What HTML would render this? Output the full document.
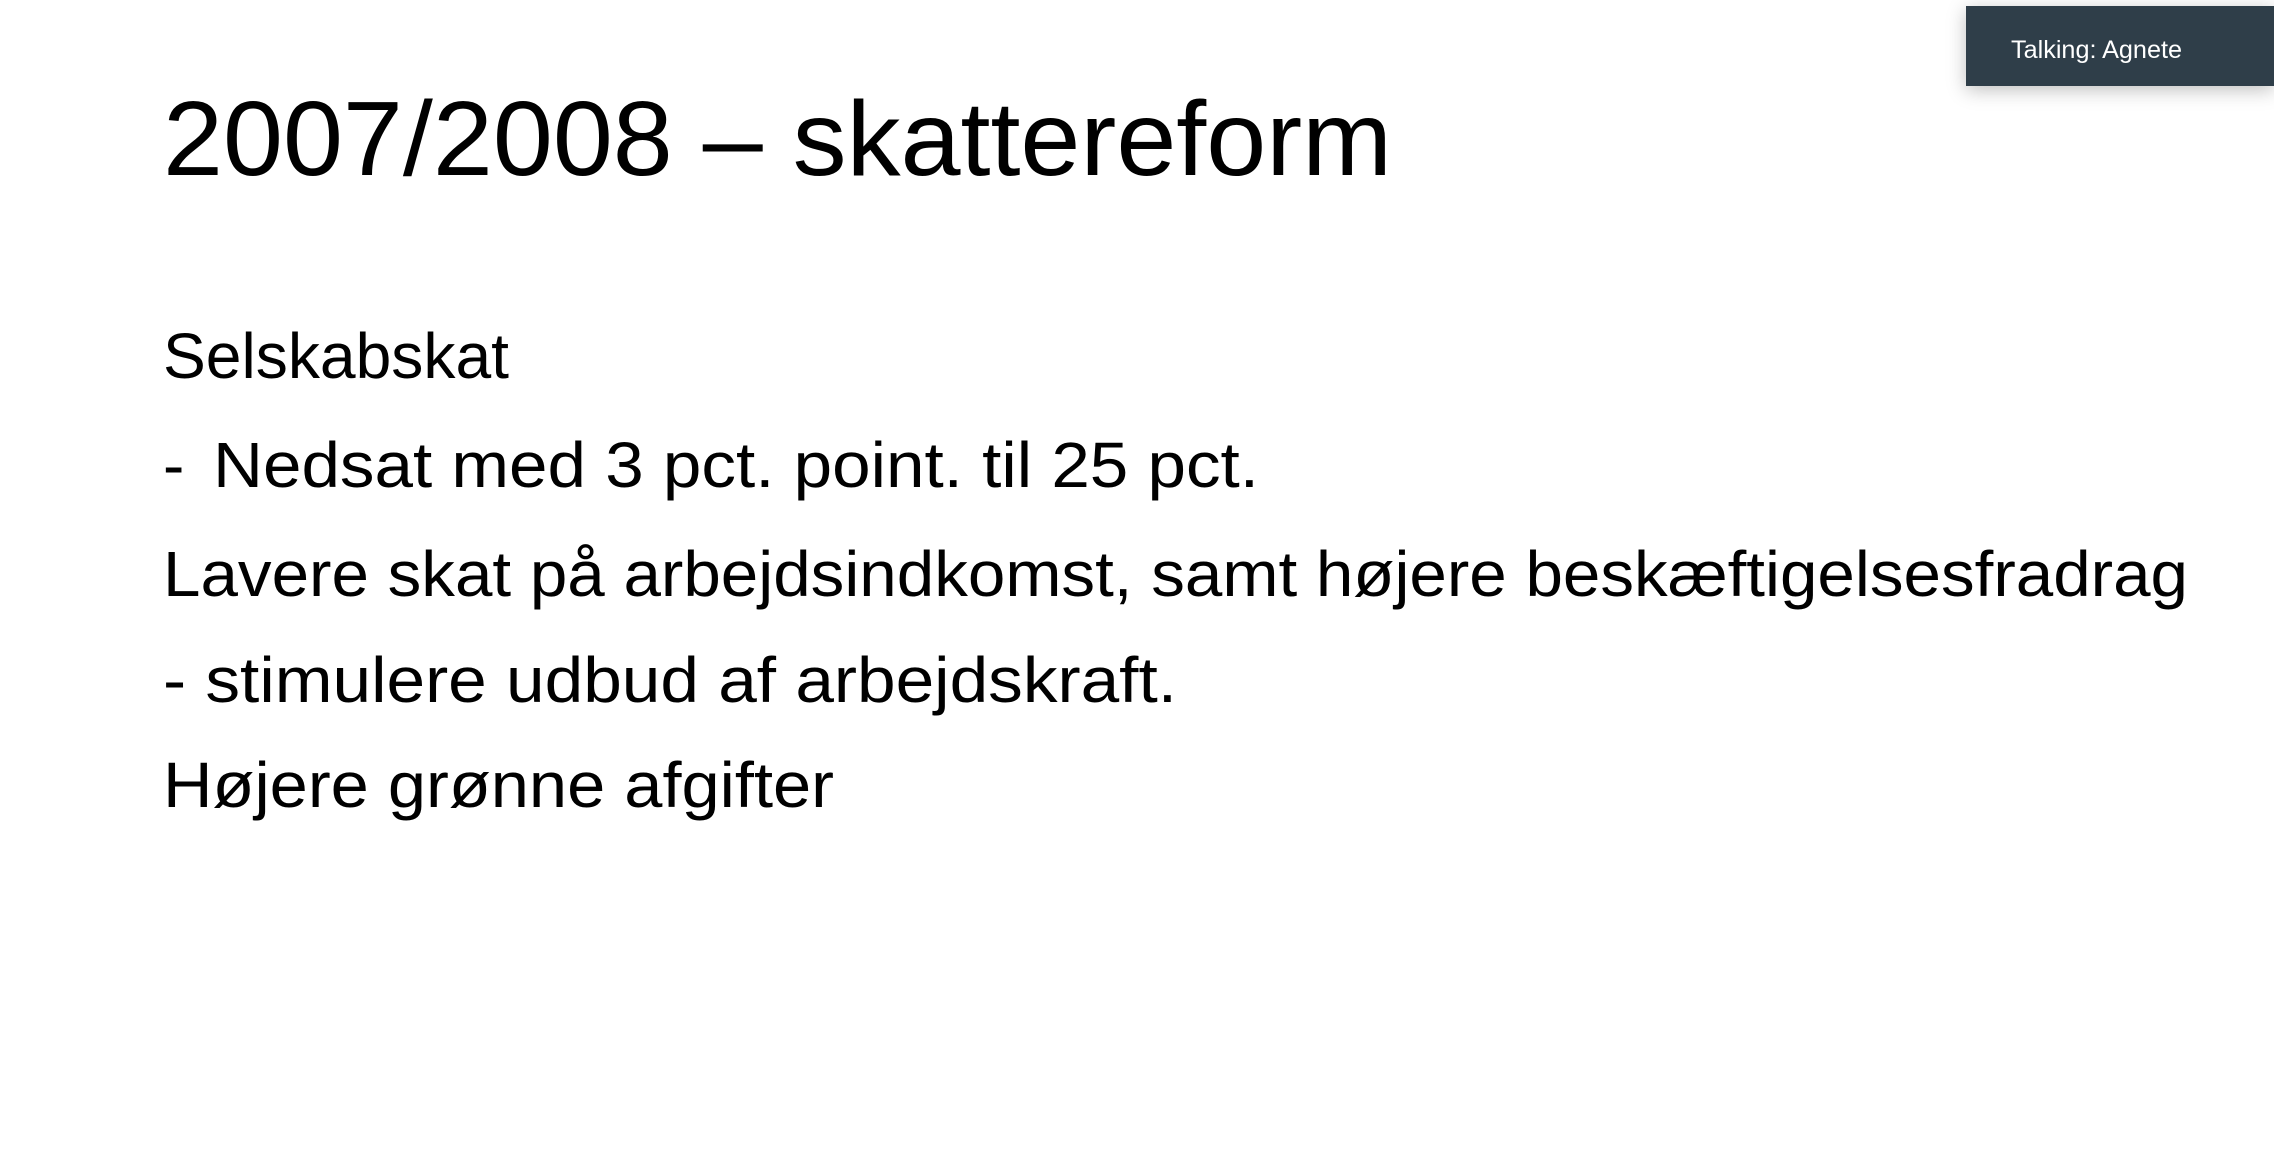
<!DOCTYPE html>
<html><head><meta charset="utf-8"><style>
html,body{margin:0;padding:0;background:#fff;width:2274px;height:1174px;overflow:hidden}
svg{position:absolute;left:0;top:0}
.badge{position:absolute;left:1966px;top:6px;width:308px;height:80px;background:#2f3e49;box-shadow:0 4px 18px rgba(0,0,0,0.25)}
</style></head><body>
<svg width="2274" height="1174" font-family="'Liberation Sans', sans-serif" fill="#000">
<text x="163" y="175" font-size="106" textLength="1229" lengthAdjust="spacingAndGlyphs">2007/2008 – skattereform</text>
<text x="163" y="378" font-size="64" textLength="346" lengthAdjust="spacingAndGlyphs">Selskabskat</text>
<text x="163" y="487" font-size="64">-</text>
<text x="213" y="487" font-size="64" textLength="1046" lengthAdjust="spacingAndGlyphs">Nedsat med 3 pct. point. til 25 pct.</text>
<text x="163" y="596" font-size="64" textLength="2025" lengthAdjust="spacingAndGlyphs">Lavere skat på arbejdsindkomst, samt højere beskæftigelsesfradrag</text>
<text x="163" y="702" font-size="64" textLength="1014" lengthAdjust="spacingAndGlyphs">- stimulere udbud af arbejdskraft.</text>
<text x="163" y="807" font-size="64" textLength="671" lengthAdjust="spacingAndGlyphs">Højere grønne afgifter</text>
</svg>
<div class="badge"></div>
<svg width="2274" height="1174" font-family="'Liberation Sans', sans-serif">
<text x="2011" y="58" font-size="25" fill="#fff" textLength="171" lengthAdjust="spacingAndGlyphs">Talking: Agnete</text>
</svg>
</body></html>
